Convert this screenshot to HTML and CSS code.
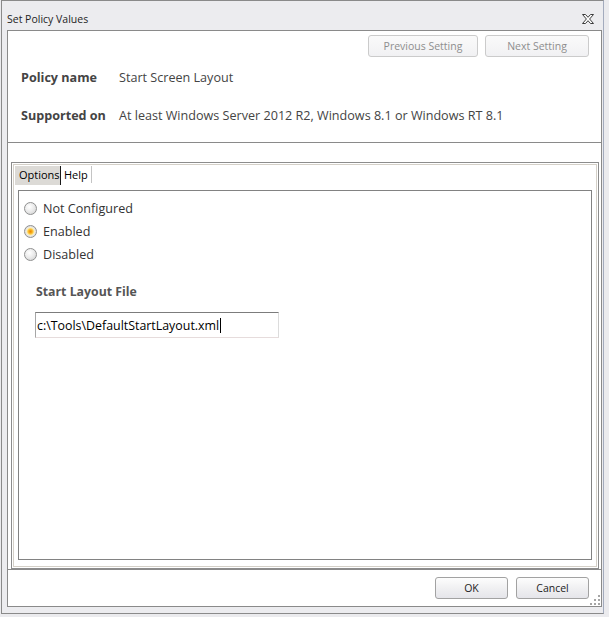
FILE: index.html
```html
<!DOCTYPE html>
<html lang="en">
<head>
    <meta charset="UTF-8">
    <title>Set Policy Values</title>
    <link rel="stylesheet" href="styles.css">
</head>
<body>
    <div class="window">
        <div class="titlebar">
            <span class="title">Set Policy Values</span>
            <svg class="close" width="12" height="10" viewBox="0 0 12 10">
                <polygon points="0.5,0.5 3.5,0.5 6,3.3 8.5,0.5 11.5,0.5 7.6,5 11.5,9.5 8.5,9.5 6,6.7 3.5,9.5 0.5,9.5 4.4,5" fill="#fff" stroke="#3c3c3c" stroke-width="1"/>
            </svg>
        </div>

        <div class="panel">
            <div class="summary">
                <div class="nav">
                    <button class="btn" disabled>Previous Setting</button>
                    <button class="btn" disabled>Next Setting</button>
                </div>
                <div class="field">
                    <span class="label">Policy name</span>
                    <span class="value">Start Screen Layout</span>
                </div>
                <div class="field field-supported">
                    <span class="label">Supported on</span>
                    <span class="value">At least Windows Server 2012 R2, Windows 8.1 or Windows RT 8.1</span>
                </div>
            </div>

            <div class="tabs">
                <div class="tab-strip">
                    <span class="tab active">Options</span>
                    <span class="tab">Help</span>
                </div>
                <div class="tab-page">
                    <label class="option"><input class="radio" type="radio" name="state"> Not Configured</label>
                    <label class="option"><input class="radio" type="radio" name="state" checked> Enabled</label>
                    <label class="option"><input class="radio" type="radio" name="state"> Disabled</label>

                    <div class="group-title">Start Layout File</div>
                    <div class="textbox">c:\Tools\DefaultStartLayout.xml<span class="caret"></span></div>
                </div>
            </div>

            <div class="actions">
                <button class="btn btn-dialog">OK</button>
                <button class="btn btn-dialog">Cancel</button>
            </div>

            <svg class="grip" width="11" height="11" viewBox="0 0 11 11">
                <rect x="8" y="0" width="2" height="2" fill="#a5a5a5"/>
                <rect x="4" y="4" width="2" height="2" fill="#a5a5a5"/>
                <rect x="8" y="4" width="2" height="2" fill="#a5a5a5"/>
                <rect x="0" y="8" width="2" height="2" fill="#a5a5a5"/>
                <rect x="4" y="8" width="2" height="2" fill="#a5a5a5"/>
                <rect x="8" y="8" width="2" height="2" fill="#a5a5a5"/>
            </svg>
        </div>
    </div>
</body>
</html>
```

FILE: styles.css
```css
body {
    margin: 0;
    background-color: #ebebee;
    font-family: "Open Sans", "DejaVu Sans", sans-serif;
    font-size: 12px;
    color: #333;
}
.window {
    width: 603px;
    height: 614px;
    margin-left: 1px;
    box-sizing: border-box;
    border: 1px solid #8a8a8a;
    border-right-color: #a3abbd;
    padding: 0 1px 0 5px;
    background-color: #ececef;
}
.titlebar {
    height: 29px;
    display: flex;
    justify-content: space-between;
    align-items: flex-start;
}
.title {
    margin-top: 10px;
    line-height: 16px;
    font-size: 10.5px;
    color: #1e1e1e;
}
.close {
    margin: 13px 8px 0 0;
}
.panel {
    height: 577px;
    box-sizing: border-box;
    border: 1px solid #8a8a8a;
    background-color: #fff;
    display: flex;
    flex-direction: column;
    position: relative;
}
.summary {
    height: 112px;
    box-sizing: border-box;
    border-bottom: 1px solid #8a8a8a;
    padding: 4px 12px 0 13px;
}
.nav {
    display: flex;
    justify-content: flex-end;
    gap: 7px;
}
.btn {
    height: 22px;
    box-sizing: border-box;
    border: 1px solid #a2a2a2;
    border-radius: 3px;
    background: linear-gradient(#fdfdfd, #f0f0f2 50%, #e5e5ea);
    font-family: inherit;
    font-size: 10.5px;
    color: #1e1e1e;
    padding: 0;
}
.btn:disabled {
    border-color: #cbcbcb;
    background: linear-gradient(#fafafa, #f1f1f3);
    color: #8e8e8e;
}
.nav .btn:first-child {
    width: 110px;
}
.nav .btn:last-child {
    width: 104px;
}
.field {
    display: flex;
    line-height: 16px;
    margin-top: 13px;
    font-size: 12.6px;
}
.field-supported {
    margin-top: 22px;
}
.label {
    width: 98px;
    flex: none;
    font-weight: bold;
    color: #444;
}
.value {
    color: #444;
}
.tabs {
    height: 407px;
    flex: none;
    box-sizing: border-box;
    margin: 19px 2px 0 3px;
    border: 1px solid #8c8c8c;
    box-shadow: inset 0 0 0 1px #fff, inset 0 0 0 2px #d4d0c8;
    display: flex;
    flex-direction: column;
}
.tab-strip {
    display: flex;
    padding: 3px 0 0 3px;
    height: 20px;
    box-sizing: border-box;
}
.tab {
    height: 17px;
    line-height: 17px;
    padding: 0 3px;
    font-size: 11px;
    color: #000;
    border-right: 1px solid #c4c4c4;
}
.tab.active {
    width: 46px;
    box-sizing: border-box;
    padding-left: 4px;
    background-color: #dcdad6;
    border-right: 1px solid #1a1a1a;
    height: 19px;
}
.tab-page {
    height: 370px;
    box-sizing: border-box;
    margin: 7px 6px 8px 6px;
    border: 1px solid #828282;
    padding-top: 6px;
}
.option {
    display: flex;
    align-items: center;
    height: 23px;
    font-size: 12.6px;
    color: #333;
}
.radio {
    appearance: none;
    -webkit-appearance: none;
    width: 13px;
    height: 13px;
    box-sizing: border-box;
    margin: 0 6px 0 5px;
    border: 1px solid #8f9090;
    border-radius: 50%;
    background: radial-gradient(circle at 40% 35%, #fff 0, #ececec 45%, #cdcdcd 100%);
}
.radio:checked {
    background: radial-gradient(circle, #ee8a00 0, #f7a917 1.6px, #fcd35a 2.8px, #fbeec2 3.8px, #e6e6e6 4.6px, #d2d2d2 100%);
}
.group-title {
    margin: 18px 0 0 17px;
    line-height: 16px;
    font-size: 12.3px;
    font-weight: bold;
    color: #555;
}
.textbox {
    width: 244px;
    height: 26px;
    box-sizing: border-box;
    margin: 12px 0 0 16px;
    border: 1px solid;
    border-color: #7c7c7c #dcdcdc #e6dcdc #a6a6a6;
    padding-left: 1px;
    display: flex;
    align-items: center;
    font-size: 12.4px;
    color: #000;
}
.caret {
    display: inline-block;
    width: 0;
    height: 15px;
    border-left: 1px solid #000;
    margin-left: 1px;
}
.actions {
    flex: 1;
    border-top: 1px solid #8a8a8a;
    display: flex;
    justify-content: flex-end;
    align-items: flex-start;
    gap: 8px;
    padding: 7px 12px 0 0;
}
.btn-dialog {
    width: 73px;
    color: #222;
}
.grip {
    position: absolute;
    right: 0;
    bottom: 0;
}
```
